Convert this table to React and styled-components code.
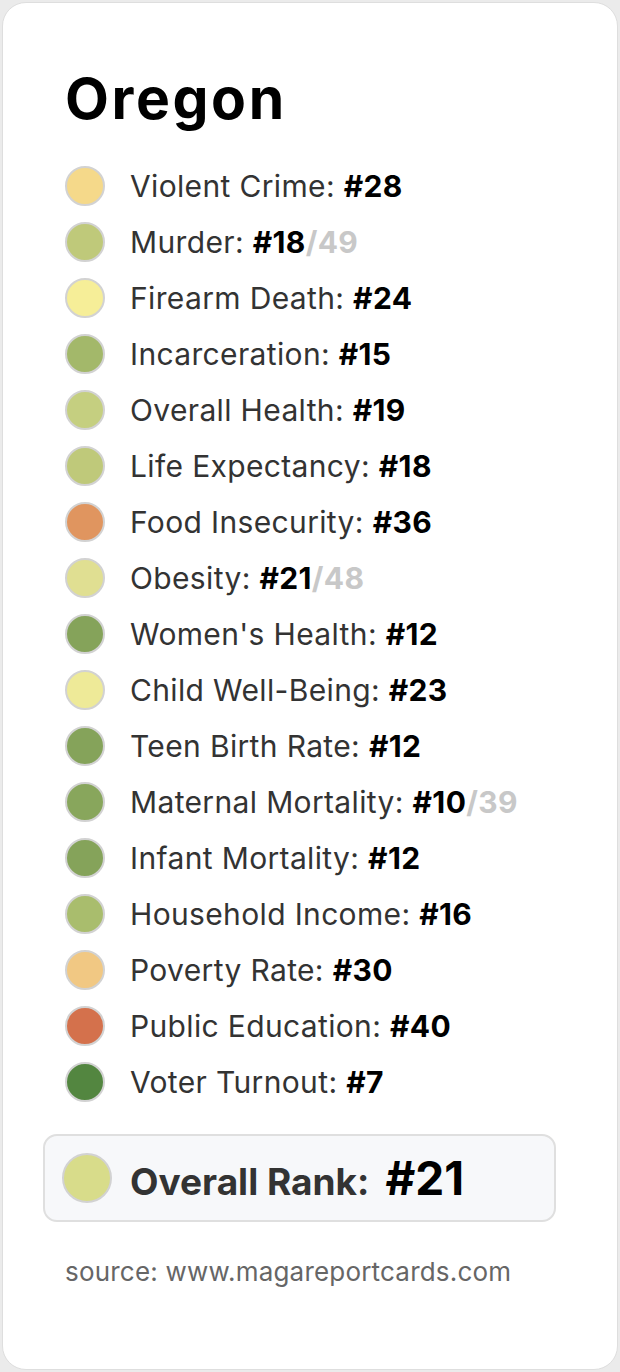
import React from "react";
import styled, { createGlobalStyle } from "styled-components";

const Global = createGlobalStyle`
  html, body { margin: 0; padding: 0; background: #ebebeb; }
  body { font-family: Inter, "Liberation Sans", Arial, sans-serif; }
`;

const Card = styled.div`
  box-sizing: border-box;
  margin: 2px;
  height: 1368px;
  background: #ffffff;
  border: 1px solid #dedede;
  border-radius: 24px;
  padding: 64px 62px 0 40px;
  display: flex;
  flex-direction: column;
`;

const Title = styled.h1`
  margin: 0 0 27px 22px;
  font-size: 57px;
  line-height: 64px;
  font-weight: 700;
  letter-spacing: 2.6px;
  color: #000;
`;

const List = styled.ul`
  list-style: none;
  margin: 0 0 0 22px;
  padding: 0;
  display: flex;
  flex-direction: column;
`;

const Row = styled.li`
  display: flex;
  align-items: center;
  gap: 25px;
  height: 56px;
  font-size: 30px;
  letter-spacing: 0.35px;
  color: #333;
`;

const Dot = styled.span`
  box-sizing: border-box;
  flex: none;
  width: ${(p) => p.$size || 40}px;
  height: ${(p) => p.$size || 40}px;
  border-radius: 50%;
  background: ${(p) => p.$color};
  border: 2px solid #d2d2d2;
`;

const Rank = styled.b`
  font-weight: 700;
  color: #000;
`;

const Total = styled.span`
  font-weight: 700;
  color: #c8c8c8;
`;

const Overall = styled.div`
  box-sizing: border-box;
  margin-top: 24px;
  width: 513px;
  height: 88px;
  background: #f7f8fa;
  border: 2px solid #dfdfdf;
  border-radius: 14px;
  display: flex;
  align-items: center;
  padding-left: 17px;
  gap: 18px;
`;

const OverallLabel = styled.span`
  font-size: 37px;
  font-weight: 700;
  color: #333;
`;

const OverallRank = styled.span`
  margin-left: 16px;
  font-size: 46px;
  font-weight: 700;
  color: #000;
`;

const Source = styled.p`
  margin: 34px 0 0 22px;
  font-size: 26px;
  letter-spacing: 0.2px;
  color: #666;
`;

const items = [
  ["Violent Crime", 28, null, "#f5d98a"],
  ["Murder", 18, 49, "#bfc97a"],
  ["Firearm Death", 24, null, "#f6ee98"],
  ["Incarceration", 15, null, "#a3b86a"],
  ["Overall Health", 19, null, "#c5cf80"],
  ["Life Expectancy", 18, null, "#bfc97a"],
  ["Food Insecurity", 36, null, "#e0955f"],
  ["Obesity", 21, 48, "#e0df92"],
  ["Women's Health", 12, null, "#85a35a"],
  ["Child Well-Being", 23, null, "#eeea98"],
  ["Teen Birth Rate", 12, null, "#85a35a"],
  ["Maternal Mortality", 10, 39, "#88a65c"],
  ["Infant Mortality", 12, null, "#85a35a"],
  ["Household Income", 16, null, "#a9bd6d"],
  ["Poverty Rate", 30, null, "#f1c883"],
  ["Public Education", 40, null, "#d4714c"],
  ["Voter Turnout", 7, null, "#538640"],
];

export default function App() {
  return (
    <>
      <Global />
      <Card>
        <Title>Oregon</Title>
        <List>
          {items.map(([label, rank, total, color]) => (
            <Row key={label}>
              <Dot $color={color} />
              <span>
                {label}: <Rank>#{rank}</Rank>
                {total && <Total>/{total}</Total>}
              </span>
            </Row>
          ))}
        </List>
        <Overall>
          <Dot $color="#d8dc8a" $size={50} />
          <OverallLabel>
            Overall Rank:<OverallRank>#21</OverallRank>
          </OverallLabel>
        </Overall>
        <Source>source: www.magareportcards.com</Source>
      </Card>
    </>
  );
}
